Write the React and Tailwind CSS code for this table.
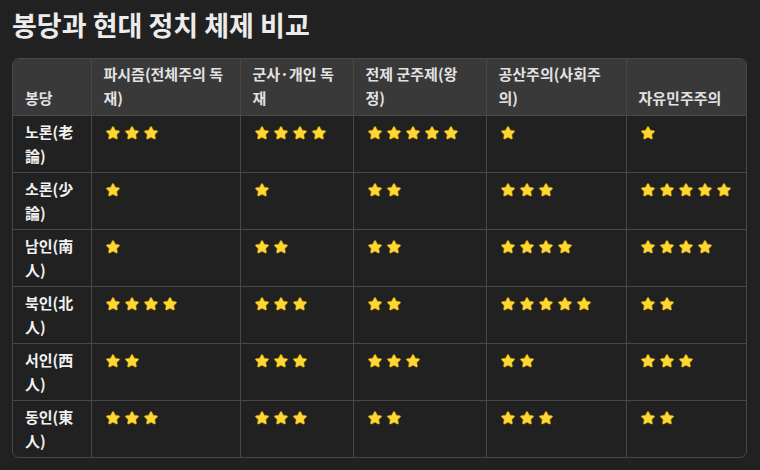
import React from 'react';

const COLS = ['파시즘(전체주의 독재)', '군사·개인 독재', '전제 군주제(왕정)', '공산주의(사회주의)', '자유민주주의'];
const WIDTHS = ['w-[78px]', 'w-[149px]', 'w-[113px]', 'w-[133px]', 'w-[140px]', 'w-[122px]'];

const ROWS = [
  { name: '노론(老論)', stars: [3, 4, 5, 1, 1] },
  { name: '소론(少論)', stars: [1, 1, 2, 3, 5] },
  { name: '남인(南人)', stars: [1, 2, 2, 4, 4] },
  { name: '북인(北人)', stars: [4, 3, 2, 5, 2] },
  { name: '서인(西人)', stars: [2, 3, 3, 2, 3] },
  { name: '동인(東人)', stars: [3, 3, 2, 3, 2] },
];

function Star() {
  return (
    <svg width="16" height="16" viewBox="0 0 24 24" className="shrink-0">
      <path d="M12 2.2c.5 0 .9.3 1.1.7l2.4 4.9 5.4.8c1 .1 1.4 1.3.7 2l-3.9 3.8.9 5.4c.2 1-.9 1.7-1.7 1.2L12 18.5l-4.9 2.5c-.9.5-1.9-.2-1.7-1.2l.9-5.4-3.9-3.8c-.7-.7-.3-1.9.7-2l5.4-.8 2.4-4.9c.2-.4.6-.7 1.1-.7z" fill="#fdd835" stroke="#d9a300" strokeWidth="0.9" />
    </svg>
  );
}

export default function App() {
  return (
    <div className="w-[760px] h-[470px] bg-[#212121] px-3 pt-[7px] font-['Noto_Sans_CJK_KR','Noto_Sans',sans-serif] text-[#ececec] overflow-hidden">
      <h1 className="text-[27px] font-bold leading-[36px] mb-[15px]">봉당과 현대 정치 체제 비교</h1>
      <div className="w-[735px] border border-[#484848] rounded-[7px] overflow-hidden">
        <table className="w-full table-fixed border-collapse text-[15px] leading-[24px]">
          <colgroup>
            {WIDTHS.map((w, i) => <col key={i} className={w} />)}
          </colgroup>
          <thead>
            <tr className="bg-[#393939] h-[56px]">
              <th className="align-bottom text-left font-semibold px-3 pb-[5px] pt-[2px] text-[#e2e2e2]">봉당</th>
              {COLS.map((c, i) => (
                <th key={i} className="align-bottom text-left font-semibold px-3 pb-[5px] pt-[2px] text-[#e2e2e2] border-l border-[#484848]">{c}</th>
              ))}
            </tr>
          </thead>
          <tbody>
            {ROWS.map((r, ri) => (
              <tr key={ri} className="h-[57px] border-t border-[#484848]">
                <td className="align-top px-3 pt-[4px] pb-[4px] font-bold text-[#f2f2f2] break-all">{r.name}</td>
                {r.stars.map((n, ci) => (
                  <td key={ci} className="align-top pl-[13px] pr-2 pt-[9px] border-l border-[#484848]">
                    <div className="flex gap-[3px]">
                      {Array.from({ length: n }).map((_, k) => <Star key={k} />)}
                    </div>
                  </td>
                ))}
              </tr>
            ))}
          </tbody>
        </table>
      </div>
    </div>
  );
}
